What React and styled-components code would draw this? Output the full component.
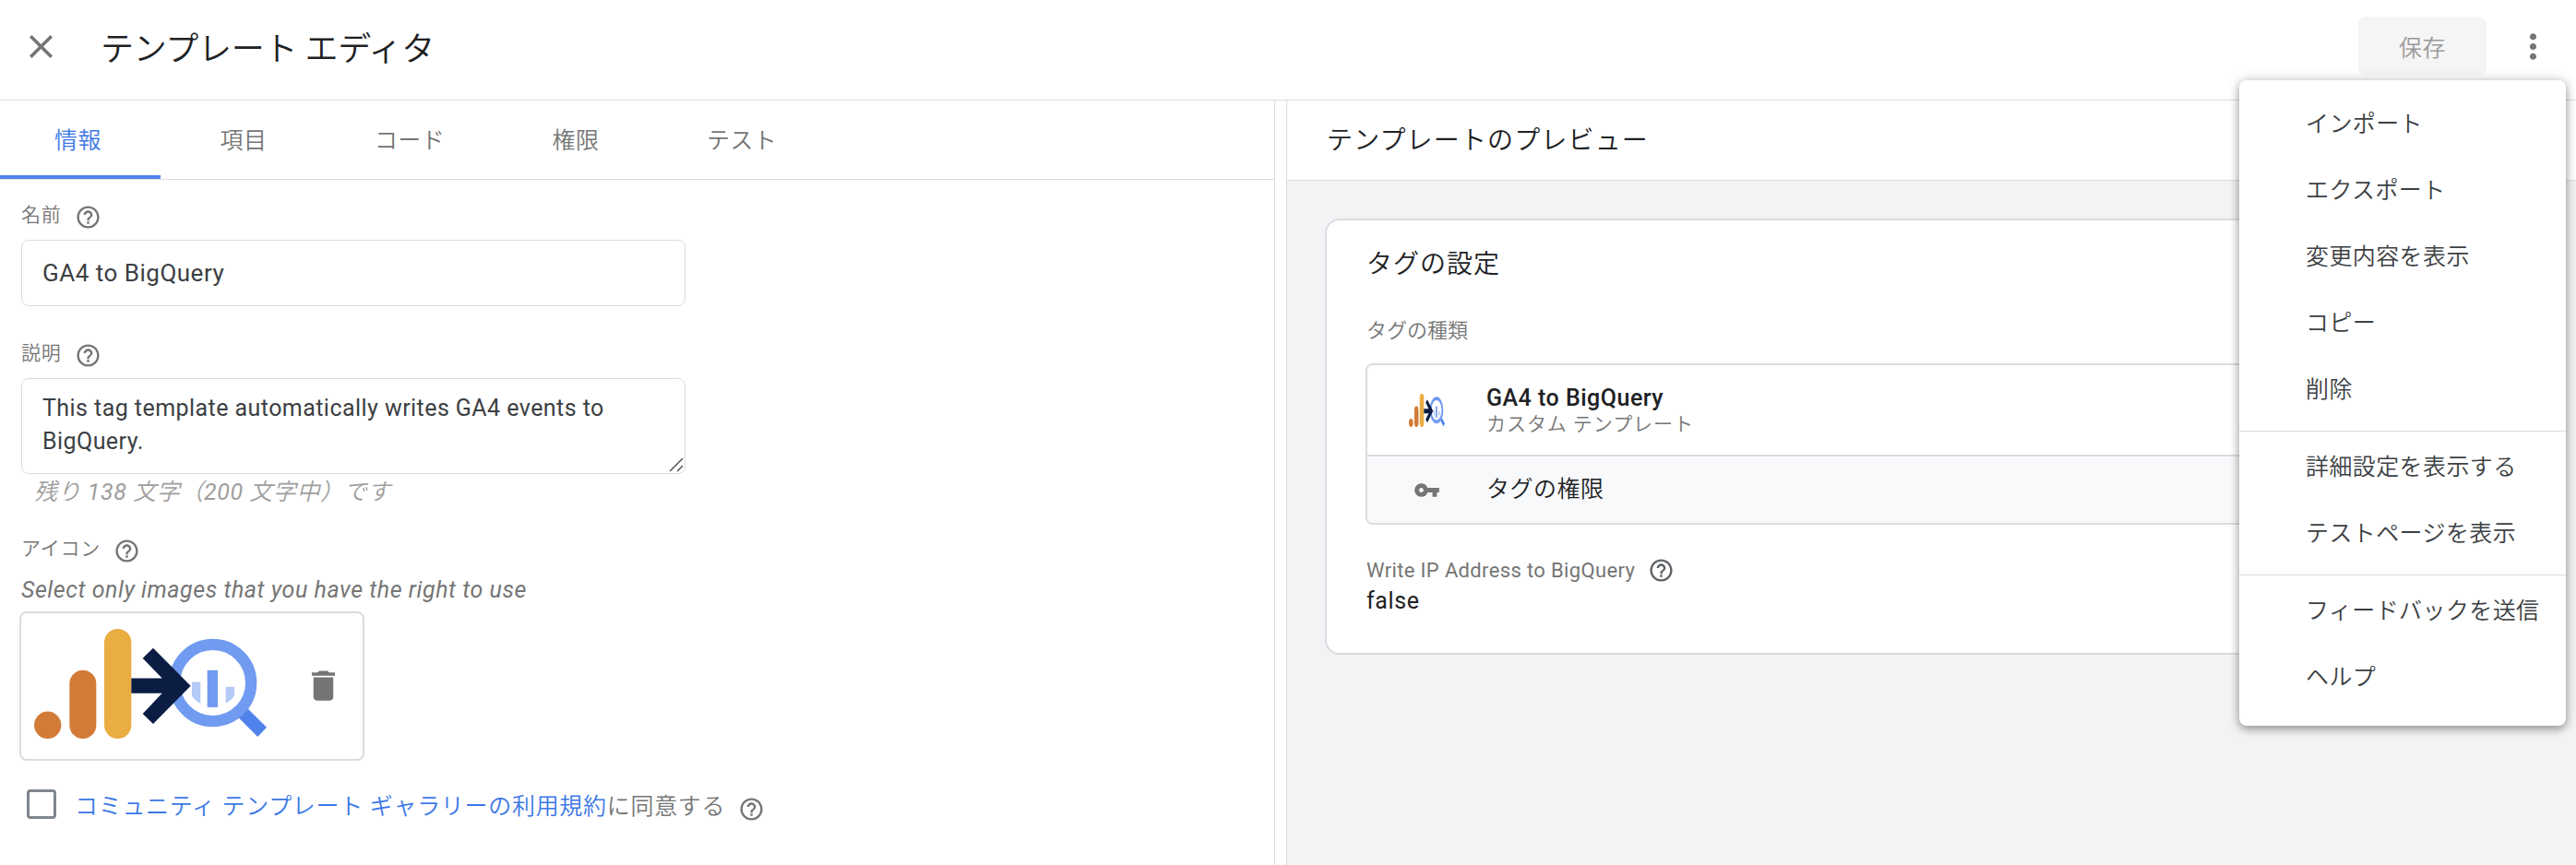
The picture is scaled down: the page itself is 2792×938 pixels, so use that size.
import React from "react";
import styled, { createGlobalStyle } from "styled-components";
import { MdClose, MdDelete, MdHelpOutline, MdMoreVert, MdVpnKey } from "react-icons/md";

const GlobalStyle = createGlobalStyle`
  * {
    box-sizing: border-box;
  }

  body {
    margin: 0;
    background: #fff;
    color: #202124;
    font-family: Roboto, "Noto Sans CJK JP", sans-serif;
    font-size: 25px;
    letter-spacing: 0.4px;
  }
`;

const Page = styled.div`
  position: relative;
  display: flex;
  flex-direction: column;
  width: 100%;
  height: 938px;
  overflow: hidden;
`;

const TopBar = styled.header`
  display: flex;
  align-items: center;
  height: 109px;
  padding: 0 25px 8px 23px;
  border-bottom: 1px solid #dadce0;

  svg {
    color: #757575;
  }
`;

const Title = styled.h1`
  flex: 1;
  margin: 8px 0 0 43px;
  font-size: 36px;
  font-weight: 350;
  letter-spacing: -0.3px;
  line-height: 50px;
`;

const SaveButton = styled.button`
  width: 139px;
  height: 64px;
  margin-right: 29px;
  padding: 0 6px;
  border: none;
  border-radius: 8px;
  background: #f5f5f5;
  color: #9a9a9a;
  font: inherit;
  font-weight: 350;
  letter-spacing: inherit;
`;

const Main = styled.main`
  display: flex;
  flex: 1;
  min-height: 0;
`;

const EditorPane = styled.section`
  width: 1382px;
  border-right: 1px solid #dadce0;
`;

const Splitter = styled.div`
  width: 12px;
`;

const PreviewPane = styled.section`
  flex: 1;
  border-left: 1px solid #dadce0;
  background: #f1f3f4;
`;

const Tabs = styled.nav`
  display: flex;
  height: 86px;
  border-bottom: 1px solid #dadce0;
`;

const Tab = styled.div`
  width: ${(props) => (props.$active ? "174px" : "180px")};
  padding-right: ${(props) => (props.$active ? "5px" : "0")};
  border-bottom: 4px solid ${(props) => (props.$active ? "#5183ec" : "transparent")};
  color: ${(props) => (props.$active ? "#3c78e6" : "#757575")};
  font-weight: 350;
  line-height: 87px;
  text-align: center;
`;

const Form = styled.div`
  padding: 16px 0 0 23px;
`;

const Label = styled.div`
  display: flex;
  align-items: center;
  gap: 14px;
  height: 40px;
  margin-top: ${(props) => props.$top || "0"};
  color: #757575;
  font-size: 21px;
  font-weight: 350;
  letter-spacing: 0.8px;

  svg {
    margin-top: 9px;
  }
`;

const Input = styled.div`
  width: 720px;
  height: 72px;
  margin-top: 9px;
  padding: 0 22px;
  border: 1px solid #dadce0;
  border-radius: 8px;
  color: #3c4043;
  font-size: 26px;
  letter-spacing: 0.5px;
  line-height: 70px;
`;

const TextArea = styled.div`
  position: relative;
  width: 720px;
  height: 104px;
  margin-top: 9px;
  padding: 14px 22px;
  border: 1px solid #dadce0;
  border-radius: 8px;
  color: #3c4043;
  letter-spacing: 0.44px;
  line-height: 36px;
`;

const ResizeGrip = styled.svg`
  position: absolute;
  right: 1px;
  bottom: 1px;
`;

const Counter = styled.div`
  height: 38px;
  padding-left: 14px;
  color: #9e9e9e;
  font-style: italic;
  font-weight: 350;
  letter-spacing: 0.6px;
  line-height: 39px;
`;

const Count = styled.span`
  font-weight: 400;
`;

const Hint = styled.div`
  height: 50px;
  color: #757575;
  font-style: italic;
  letter-spacing: 0.55px;
  line-height: 54px;
`;

const Thumbnail = styled.div`
  display: flex;
  align-items: center;
  width: 374px;
  height: 162px;
  margin-left: -2px;
  padding: 0 0 5px 14px;
  border: 2px solid #dadce0;
  border-radius: 8px;
  color: #757575;

  svg:last-child {
    margin: 3px 0 0 40px;
  }
`;

const Agreement = styled.div`
  display: flex;
  align-items: center;
  height: 32px;
  margin-top: 31px;
  padding-left: 6px;
  color: #757575;
  font-weight: 350;
  letter-spacing: 0.7px;

  svg {
    margin: 10px 0 0 14px;
  }
`;

const Checkbox = styled.span`
  width: 32px;
  height: 32px;
  margin-right: 20px;
  border: 3px solid #80868b;
  border-radius: 4px;
`;

const Link = styled.a`
  color: #3c78e6;
`;

const PreviewHeader = styled.div`
  height: 87px;
  padding-left: 43px;
  border-bottom: 1px solid #dadce0;
  background: #fff;
  font-size: 28px;
  font-weight: 350;
  letter-spacing: 1.15px;
  line-height: 87px;
`;

const Card = styled.div`
  height: 473px;
  margin: 41px 41px 0;
  padding: 24px 44px 0 43px;
  border: 2px solid #dadce0;
  border-radius: 16px;
  background: #fff;
`;

const CardTitle = styled.h2`
  margin: 0;
  font-size: 28px;
  font-weight: 350;
  letter-spacing: 1px;
  line-height: 48px;
`;

const Caption = styled.div`
  display: flex;
  align-items: center;
  gap: 14px;
  height: 40px;
  margin-top: ${(props) => props.$top};
  color: #757575;
  font-size: 22px;
  font-weight: ${(props) => props.$weight || 400};
  letter-spacing: ${(props) => props.$spacing || "0"};

  svg {
    color: #5f6368;
  }
`;

const TagBox = styled.div`
  height: 175px;
  margin: 18px 0 0 -1px;
  border: 2px solid #dadce0;
  border-radius: 8px;
  overflow: hidden;
`;

const TagRow = styled.div`
  display: flex;
  align-items: center;
  height: ${(props) => props.$height};
  border-bottom: ${(props) => (props.$muted ? "none" : "2px solid #dadce0")};
  background: ${(props) => (props.$muted ? "#f8f9fb" : "#fff")};
`;

const TagIcon = styled.div`
  display: flex;
  justify-content: center;
  width: 129px;
  color: #757575;
`;

const TagName = styled.div`
  font-weight: ${(props) => props.$weight};
  letter-spacing: 0.5px;
  line-height: 32px;
`;

const TagType = styled.div`
  color: #757575;
  font-size: 21px;
  font-weight: 350;
  letter-spacing: 0.95px;
  line-height: 25px;
`;

const Value = styled.div`
  margin-top: -2px;
  letter-spacing: 0.6px;
  line-height: 32px;
`;

const Menu = styled.div`
  position: absolute;
  top: 87px;
  right: 11px;
  width: 354px;
  height: 700px;
  padding: 12px 0 16px;
  border-radius: 8px;
  background: #fff;
  box-shadow: 0 4px 10px rgba(0, 0, 0, 0.3), 0 0 14px rgba(0, 0, 0, 0.18);
`;

const MenuItem = styled.div`
  height: 72px;
  padding-left: 72px;
  color: #3c4043;
  font-weight: 350;
  line-height: 72px;
  white-space: nowrap;
`;

const Separator = styled.div`
  height: 1px;
  margin: 8px 0 3px;
  background: #dadce0;
`;

const TemplateLogo = ({ width, height }) => (
  <svg width={width} height={height} viewBox="111 124 756 356" preserveAspectRatio="none">
    <circle cx="155" cy="436" r="44" fill="#d27b38" />
    <rect x="226" y="258" width="87" height="222" rx="43.5" fill="#d27b38" />
    <rect x="339" y="124" width="88" height="356" rx="44" fill="#eaad42" />
    <path d="M805 382 867 443 838 474 775 411Z" fill="#5183ec" />
    <circle cx="692" cy="299" r="124.5" fill="none" stroke="#719bf0" strokeWidth="37" />
    <path d="M674 258H708V378H674Z" fill="#719bf0" />
    <path d="M624 296H652V366Q634 357 624 341Z" fill="#b4caf7" />
    <path d="M734 312H762V341Q752 357 734 365Z" fill="#b4caf7" />
    <path d="M427 284H527L464 219 498 186 620 309 498 432 464 399 527 333H427Z" fill="#0c1d44" />
  </svg>
);

const tabs = ["情報", "項目", "コード", "権限", "テスト"];

const menuGroups = [
  ["インポート", "エクスポート", "変更内容を表示", "コピー", "削除"],
  ["詳細設定を表示する", "テストページを表示"],
  ["フィードバックを送信", "ヘルプ"],
];

const App = () => {
  return (
    <Page lang="ja">
      <GlobalStyle />
      <TopBar>
        <MdClose size={43} />
        <Title>テンプレート エディタ</Title>
        <SaveButton disabled>保存</SaveButton>
        <MdMoreVert size={43} />
      </TopBar>

      <Main>
        <EditorPane>
          <Tabs>
            {tabs.map((tab, i) => (
              <Tab key={tab} $active={i === 0}>
                {tab}
              </Tab>
            ))}
          </Tabs>
          <Form>
            <Label>
              名前
              <MdHelpOutline size={29} />
            </Label>
            <Input>GA4 to BigQuery</Input>
            <Label $top="29px">
              説明
              <MdHelpOutline size={29} />
            </Label>
            <TextArea>
              This tag template automatically writes GA4 events to BigQuery.
              <ResizeGrip width="16" height="16" viewBox="0 0 16 16" stroke="#555" strokeWidth="1.5">
                <path d="M1 15 15 1M9 15l6-6" />
              </ResizeGrip>
            </TextArea>
            <Counter>
              残り <Count>138</Count> 文字（<Count>200</Count> 文字中）です
            </Counter>
            <Label $top="21px">
              アイコン
              <MdHelpOutline size={29} />
            </Label>
            <Hint>Select only images that you have the right to use</Hint>
            <Thumbnail>
              <TemplateLogo width={252} height={119} />
              <MdDelete size={43} />
            </Thumbnail>
            <Agreement>
              <Checkbox />
              <Link>コミュニティ テンプレート ギャラリーの利用規約</Link>に同意する
              <MdHelpOutline size={29} />
            </Agreement>
          </Form>
        </EditorPane>
        <Splitter />
        <PreviewPane>
          <PreviewHeader>テンプレートのプレビュー</PreviewHeader>
          <Card>
            <CardTitle>タグの設定</CardTitle>
            <Caption $top="25px" $weight={350}>
              タグの種類
            </Caption>
            <TagBox>
              <TagRow $height="99px">
                <TagIcon>
                  <TemplateLogo width={39} height={36} />
                </TagIcon>
                <div>
                  <TagName $weight={500}>GA4 to BigQuery</TagName>
                  <TagType>カスタム テンプレート</TagType>
                </div>
              </TagRow>
              <TagRow $height="72px" $muted>
                <TagIcon>
                  <MdVpnKey size={29} />
                </TagIcon>
                <TagName $weight={350}>タグの権限</TagName>
              </TagRow>
            </TagBox>
            <Caption $top="29px" $spacing="0.35px">
              Write IP Address to BigQuery
              <MdHelpOutline size={29} />
            </Caption>
            <Value>false</Value>
          </Card>
        </PreviewPane>
      </Main>

      <Menu>
        {menuGroups.map((group, i) => (
          <React.Fragment key={group[0]}>
            {i > 0 && <Separator />}
            {group.map((item) => (
              <MenuItem key={item}>{item}</MenuItem>
            ))}
          </React.Fragment>
        ))}
      </Menu>
    </Page>
  );
};

export default App;
